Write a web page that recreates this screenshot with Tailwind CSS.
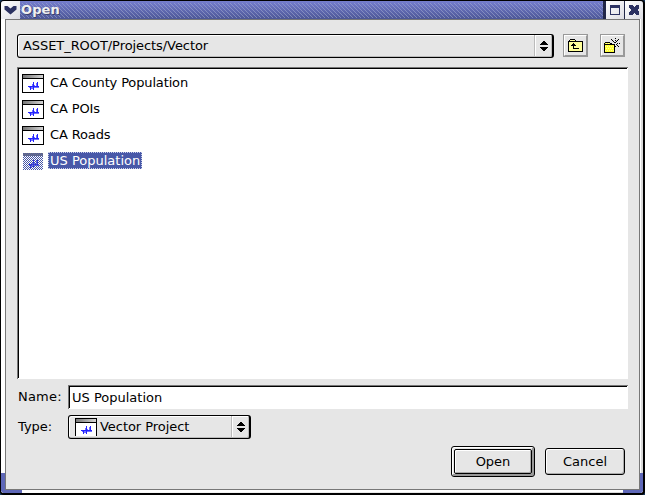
<!DOCTYPE html>
<html lang="en">
<head>
<meta charset="utf-8">
<title>Open</title>
<script src="https://cdn.jsdelivr.net/npm/@tailwindcss/browser@4"></script>
</head>
<body class="w-[645px] h-[495px] overflow-hidden bg-[#17375c] font-['DejaVu_Sans',sans-serif] text-[13px] leading-4 text-black">
<svg width="0" height="0" class="absolute" aria-hidden="true">
  <defs>
    <linearGradient id="bar" x1="0" x2="1" y1="0" y2="0"><stop offset="0" stop-color="#777"/><stop offset="1" stop-color="#d4d4d4"/></linearGradient>
    <pattern id="dots" width="2" height="2" patternUnits="userSpaceOnUse"><path fill="#4858a8" d="M0 0h1v1H0zM1 1h1v1H1z"/></pattern>
    <symbol id="wave" viewBox="0 0 22 19">
      <path fill="#22f" d="M6 12h11v1H6zM8 12h1v4H8zM11 8h1v8h-1zM15 8h1v5h-1z"/>
      <path fill="#22f" fill-opacity=".65" d="M7 13h10v1H7zM9 12h1v3H9zM10 10h1v5h-1zM14 9h1v5h-1zM12 11h1v3h-1z"/>
    </symbol>
    <symbol id="vector" viewBox="0 0 22 19">
      <path fill="#000" d="M0 0h22v19H0z"/><path fill="#fff" d="M1 5h20v13H1z"/>
      <path fill="url(#bar)" d="M1 1h20v3H1z"/>
      <use href="#wave" width="22" height="19"/>
    </symbol>
    <symbol id="updown" viewBox="0 0 8 10"><path d="M3 0h2v1H3zM2 1h4v1H2zM1 2h6v1H1zM0 3h8v1H0zM0 6h8v1H0zM1 7h6v1H1zM2 8h4v1H2zM3 9h2v1H3z"/></symbol>
  </defs>
</svg>
<main class="w-[645px] h-[495px] bg-black rounded-t-[4px] rounded-b-[4px] overflow-hidden pt-px pl-px pr-[2px] pb-[2px]">
  <div class="relative h-full bg-[#e6e6e6] flex flex-col rounded-[3px] overflow-hidden">
    <header class="h-[18px] shrink-0 flex bg-[#222747]">
      <div class="w-[19px] bg-linear-to-br from-white to-[#dcdce2] flex items-center justify-center">
        <svg width="13" height="10" viewBox="0 0 13 10"><path fill="#2b3161" d="M.5 1h3l3 2.500L9.500 1h3v3.500l-6 5-6-5z"/></svg>
      </div>
      <div class="relative flex-1 overflow-hidden">
        <svg class="absolute inset-0" width="100%" height="18">
          <defs>
            <linearGradient id="title" x2="0" y2="1"><stop offset="0" stop-color="#757ece"/><stop offset="1" stop-color="#4c5696"/></linearGradient>
            <pattern id="stripe" width="4" height="4" patternUnits="userSpaceOnUse"><path fill="#aab2d4" fill-opacity=".5" d="M0 0h1v1H0zM1 1h1v1H1zM2 2h1v1H2zM3 3h1v1H3z"/></pattern>
          </defs>
          <rect width="100%" height="18" fill="url(#title)"/><rect y="2" width="100%" height="15" fill="url(#stripe)"/>
        </svg>
        <h1 class="relative pl-px pt-px text-[13px] leading-4 font-bold tracking-[0.1px] text-[#f0f0f0] [text-shadow:1px_1px_0_#39406f]">Open</h1>
      </div>
      <div class="w-[18px] ml-[3px] bg-linear-to-br from-white to-[#dcdce2] flex items-center justify-center">
        <svg width="10" height="10" viewBox="0 0 10 10" shape-rendering="crispEdges"><path fill="#2b3161" fill-rule="evenodd" d="M0 0h10v10H0zM1 3h8v6H1z"/></svg>
      </div>
      <div class="w-[18px] ml-px bg-linear-to-br from-white to-[#dcdce2] flex items-center justify-center">
        <svg width="10" height="10" viewBox="0 0 10 10" shape-rendering="crispEdges"><path fill="#2b3161" d="M0 0h3l2 2 2-2h3v3L8 5l2 2v3H7L5 8l-2 2H0V7l2-2-2-2z"/></svg>
      </div>
    </header>
    <div class="flex-1 bg-linear-to-r from-white to-[#d9d9d9] pl-[4px] pr-[3px] pb-[3px]">
      <div class="h-full border border-[#777] bg-[#e6e6e6] pl-[11px] flex flex-col items-start shadow-[0_1px_0_1px_#fff]">
        <div class="flex mt-[14px]">
          <div class="w-[537px] h-[24px] border border-r-2 border-black rounded-[3px] flex shadow-[inset_1px_1px_#fff,inset_-1px_-1px_#bbb] pr-px pb-px">
            <span class="flex-1 pl-[5px] pt-[3px] tracking-[-0.07px]">ASSET_ROOT/Projects/Vector</span>
            <span class="w-[17px] border-l border-[#bbb] shadow-[inset_1px_1px_#fff] flex items-center justify-center pl-px"><svg width="8" height="10" shape-rendering="crispEdges"><use href="#updown"/></svg></span>
          </div>
          <button class="w-[25px] h-[23px] ml-[9px] border-2 border-t-white border-l-white border-r-[#999] border-b-[#999] outline outline-[#999] -outline-offset-1 flex items-center justify-center">
            <svg width="15" height="13" viewBox="0 0 15 13" shape-rendering="crispEdges"><path d="M2 0h5v1h1v1h7v11H0V2h1V1h1z"/><path fill="#ff9" d="M2 1h5v1H2zM1 3h13v9H1z"/><path d="M5 4h1v1h1v1h1v1H6v2h5v1H5V7H3V6h1V5h1z"/></svg>
          </button>
          <button class="w-[25px] h-[23px] ml-[12px] border-2 border-t-white border-l-white border-r-[#999] border-b-[#999] outline outline-[#999] -outline-offset-1 flex items-center justify-center">
            <svg width="17" height="15" viewBox="0 0 17 15" shape-rendering="crispEdges"><path d="M1 4h5v1h1v1h4v9H0V5h1z"/><path fill="#ff3" d="M1 5h5v1H1zM1 7h9v7H1z"/><path fill="#ffffa0" d="M2 5h1v1H2zM4 5h1v1H4zM1 8h1v1H1zM3 8h1v1H3zM5 8h1v1H5zM7 8h1v1H7zM9 8h1v1H9zM2 10h1v1H2zM4 10h1v1H4zM6 10h1v1H6zM8 10h1v1H8zM1 12h1v1H1zM3 12h1v1H3zM5 12h1v1H5zM7 12h1v1H7zM9 12h1v1H9z"/><path d="M11 0h1v1h-1zM11 2h1v1h-1zM7 1h1v1H7zM8 2h1v1H8zM9 3h1v1H9zM14 1h1v1h-1zM13 2h1v1h-1zM12 3h1v1h-1zM10 4h2v1h-2zM13 5h1v1h-1zM15 5h1v1h-1zM7 5h1v1H7zM12 6h1v1h-1zM13 7h1v1h-1zM14 8h1v1h-1zM11 8h1v1h-1z"/></svg>
          </button>
        </div>
        <div class="mt-[9px] w-[611px] h-[312px] bg-white border-t border-l border-[#777]">
          <ul class="w-[609px] h-[310px] border-t border-l border-black pt-[5px] pl-[3px]">
            <li class="h-[26px] flex items-start"><svg width="22" height="19" shape-rendering="crispEdges"><use href="#vector"/></svg><span class="ml-[6px] pt-px tracking-[-0.14px]">CA County Population</span></li>
            <li class="h-[26px] flex items-start"><svg width="22" height="19" shape-rendering="crispEdges"><use href="#vector"/></svg><span class="ml-[6px] pt-px tracking-[-0.14px]">CA POIs</span></li>
            <li class="h-[26px] flex items-start"><svg width="22" height="19" shape-rendering="crispEdges"><use href="#vector"/></svg><span class="ml-[6px] pt-px tracking-[-0.14px]">CA Roads</span></li>
            <li class="h-[26px] flex items-start"><svg width="22" height="19" shape-rendering="crispEdges"><path fill="#777" d="M1 1h20v3H1z"/><use href="#wave"/><rect x="1" y="1" width="20" height="17" fill="url(#dots)"/></svg><span class="ml-[4px] h-[17px] px-px bg-[#4858a8] text-white border border-dotted border-[#c8cee8]">US Population</span></li>
          </ul>
        </div>
        <label class="flex mt-[6px]"><span class="w-[51px] pt-[4px] pl-px tracking-[0.2px]">Name:</span>
          <span class="w-[560px] h-[24px] bg-white border-t border-l border-[#777]"><span class="block w-[558px] h-[22px] border-t border-l border-black pl-[2px] pt-[3px]">US Population</span></span>
        </label>
        <div class="flex mt-[6px]"><span class="w-[51px] pt-[4px] pl-px">Type:</span>
          <div class="w-[183px] h-[24px] border border-r-2 border-black rounded-[3px] flex shadow-[inset_1px_1px_#fff,inset_-1px_-1px_#bbb] pr-px pb-px">
            <span class="flex-1 flex pl-[6px] pt-[2px]"><svg width="22" height="18" viewBox="0 0 22 18" shape-rendering="crispEdges"><use href="#vector" width="22" height="19"/></svg><span class="ml-[3px] pt-px whitespace-nowrap tracking-[-0.05px]">Vector Project</span></span>
            <span class="w-[17px] border-l border-[#bbb] shadow-[inset_1px_1px_#fff] flex items-center justify-center pl-px"><svg width="8" height="10" shape-rendering="crispEdges"><use href="#updown"/></svg></span>
          </div>
        </div>
        <div class="flex ml-[434px] mt-[7px] items-center">
          <div class="w-[84px] h-[31px] border border-black rounded-[3px] p-[2px] shadow-[inset_1px_1px_#fff,inset_-2px_-2px_#999]"><button class="w-full h-full border border-black rounded-[2px] bg-[#e6e6e6] shadow-[inset_1px_1px_#fff,inset_-1px_-1px_#aaa]">Open</button></div>
          <button class="ml-[10px] w-[80px] h-[27px] border border-black rounded-[3px] shadow-[inset_1px_1px_#fff,inset_-1px_-1px_#aaa]">Cancel</button>
        </div>
      </div>
    </div>
    <i class="absolute left-0 bottom-0 w-[21px] h-[20px] border-l-4 border-b-3 border-[#5f68b8] rounded-bl-[3px]"></i>
    <i class="absolute right-0 bottom-0 w-[20px] h-[20px] border-r-3 border-b-3 border-[#5f68b8] rounded-br-[3px]"></i>
  </div>
</main>
</body>
</html>
